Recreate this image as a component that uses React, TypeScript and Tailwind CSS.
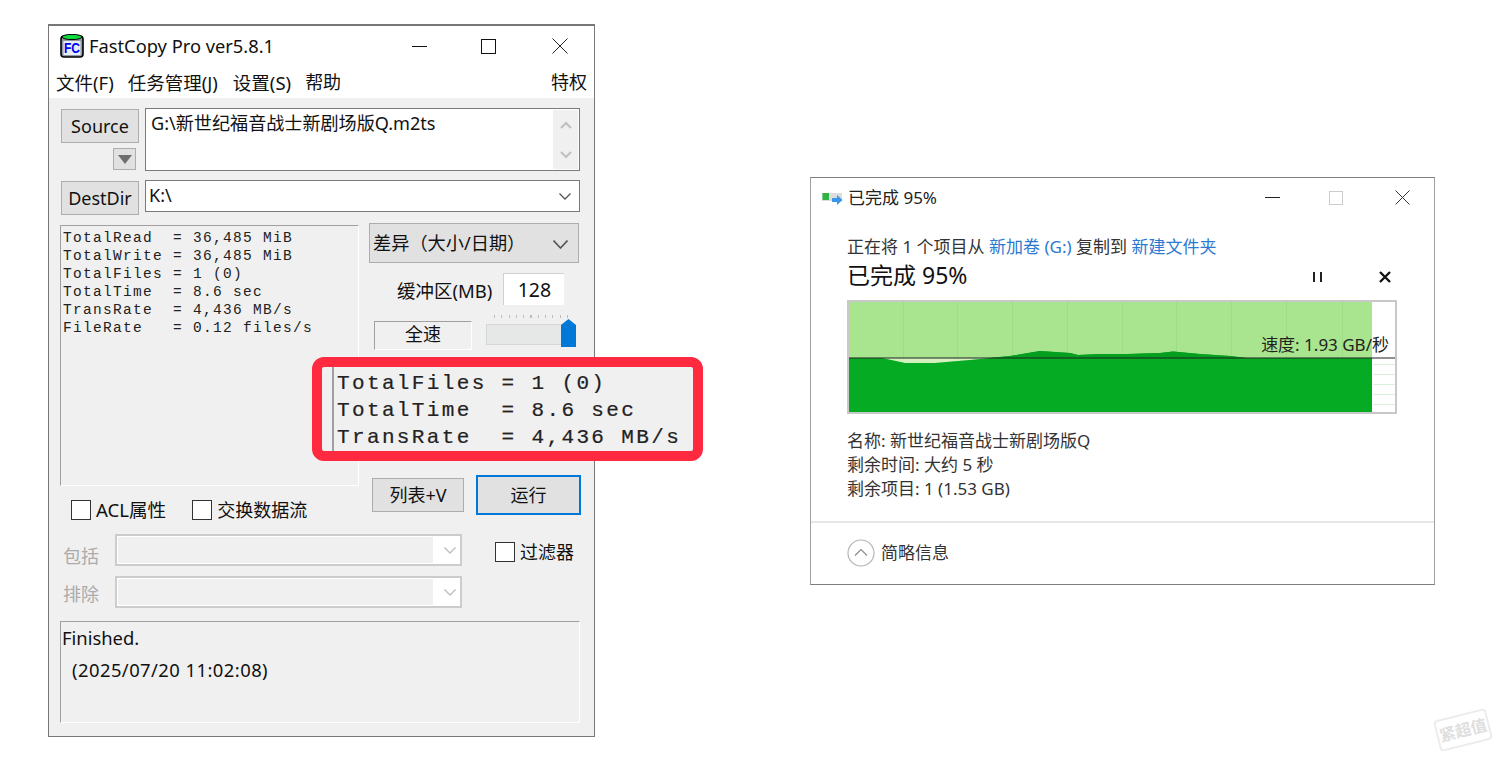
import React from "react";

const Chevron = ({ className = "", color = "#606060", w = 12, h = 7, sw = 1.3 }: { className?: string; color?: string; w?: number; h?: number; sw?: number }) => (
  <svg width={w} height={h} viewBox={`0 0 ${w} ${h}`} className={className} fill="none">
    <path d={`M0.5 0.5 L${w / 2} ${h - 1} L${w - 0.5} 0.5`} stroke={color} strokeWidth={sw} />
  </svg>
);

const Check = ({ label, className = "", textClass = "text-[18px]" }: { label: string; className?: string; textClass?: string }) => (
  <div className={`flex items-center gap-[5px] ${className}`}>
    <div className="w-[20px] h-[20px] bg-white border border-[#333333] shrink-0" />
    <span className={`${textClass} leading-[24px] text-[#111] whitespace-nowrap`}>{label}</span>
  </div>
);

const Btn = ({ label, className = "" }: { label: string; className?: string }) => (
  <div className={`flex items-center justify-center bg-[#e1e1e1] text-[18px] text-[#111] whitespace-nowrap ${className}`}>{label}</div>
);

const Disabled = ({ label, labelClass }: { label: string; labelClass: string }) => (
  <div className="flex items-start h-[32px]">
    <span className={`w-[52px] text-[18px] leading-[24px] text-[#ababab] ${labelClass}`}>{label}</span>
    <div className="w-[347px] h-[32px] bg-white border-2 border-[#cccccc] flex items-center">
      <div className="w-[315px] h-[26px] ml-px bg-[#f0f0f0]" />
      <Chevron className="ml-[11px]" color="#bdbdbd" w={12} h={7} />
    </div>
  </div>
);

const stats = [
  "TotalRead  = 36,485 MiB",
  "TotalWrite = 36,485 MiB",
  "TotalFiles = 1 (0)",
  "TotalTime  = 8.6 sec",
  "TransRate  = 4,436 MB/s",
  "FileRate   = 0.12 files/s",
];

const gridXs = [54, 108, 163, 218, 273, 327, 382, 437, 493];
const fasterLines = [62, 72, 82, 92, 102];

const FastCopy = () => (
  <div className="relative w-[547px] h-[713px] shrink-0 border border-[#777777] border-t-2 bg-white flex flex-col">
    {/* title bar */}
    <div className="h-[43px] flex items-center shrink-0 pb-[3px]">
      <svg width="24" height="24" viewBox="0 0 24 24" className="ml-[11px]">
        <rect x="1" y="2" width="22" height="21" rx="3" fill="#8f98a3" stroke="#000" strokeWidth="1.6" />
        <ellipse cx="12" cy="3" rx="10" ry="2.6" fill="#0fdc3c" stroke="#000" strokeWidth="1" />
        <rect x="3.5" y="7" width="17" height="14" fill="#e8ecf4" />
        <text x="12" y="19.4" textAnchor="middle" fontSize="14.5" fontWeight="700" fill="#0000f0" fontFamily="Liberation Sans" textLength="16" lengthAdjust="spacingAndGlyphs">FC</text>
      </svg>
      <span className="ml-[5px] text-[18.3px] text-[#111] whitespace-nowrap">FastCopy Pro ver5.8.1</span>
      <div className="ml-[138px] w-[15px] h-px bg-[#111]" />
      <div className="ml-[54px] w-[15px] h-[15px] border border-[#111]" />
      <svg width="16" height="16" viewBox="0 0 16 16" className="ml-[56px]">
        <path d="M0.5 0.5 L15.5 15.5 M15.5 0.5 L0.5 15.5" stroke="#222" strokeWidth="1" />
      </svg>
    </div>
    {/* menu */}
    <div className="h-[29px] flex items-center pl-[7px] pr-[7px] pb-[2px] text-[18.5px] text-[#111] shrink-0">
      <span>文件(F)</span>
      <span className="ml-[14px]">任务管理(J)</span>
      <span className="ml-[15px]">设置(S)</span>
      <span className="ml-[14px] text-[18px]">帮助</span>
      <span className="ml-auto text-[18px]">特权</span>
    </div>
    {/* client */}
    <div className="flex-1 bg-[#f0f0f0] pl-[11px] pt-[10px] flex flex-col min-h-0">
      {/* source */}
      <div className="flex">
        <div className="w-[85px] shrink-0 flex flex-col pl-px pt-px">
          <Btn label="Source" className="w-[78px] h-[34px] border border-[#adadad]" />
          <div className="self-end mr-[9px] mt-[5px] w-[23px] h-[22px] bg-[#e1e1e1] border border-[#adadad] flex items-center justify-center">
            <svg width="14" height="9" viewBox="0 0 14 9"><path d="M0 0 H14 L7 9 Z" fill="#6e6e6e" /></svg>
          </div>
        </div>
        <div className="w-[435px] h-[63px] bg-white border border-[#7a7a7a] relative pl-[5px] text-[18.1px] leading-[28px] text-[#111] whitespace-nowrap">
          G:\新世纪福音战士新剧场版Q.m2ts
          <div className="absolute right-px top-px bottom-px w-[25px] bg-[#f0f0f0] flex flex-col items-center justify-center gap-[22px]">
            <svg width="12" height="8" viewBox="0 0 12 8" fill="none"><path d="M1 7 L6 2 L11 7" stroke="#c0c0c0" strokeWidth="2.2" /></svg>
            <svg width="12" height="8" viewBox="0 0 12 8" fill="none"><path d="M1 1 L6 6 L11 1" stroke="#c0c0c0" strokeWidth="2.2" /></svg>
          </div>
        </div>
      </div>
      {/* dest */}
      <div className="flex mt-[9px]">
        <div className="w-[85px] shrink-0 pl-px pt-px">
          <Btn label="DestDir" className="w-[78px] h-[34px] border border-[#adadad]" />
        </div>
        <div className="w-[435px] h-[32px] bg-white border border-[#7a7a7a] flex items-center pl-[3px] pr-[8px] text-[18px] text-[#111]">
          <span className="-mt-[2px]">K:\</span>
          <Chevron className="ml-auto" color="#555555" />
        </div>
      </div>
      {/* middle */}
      <div className="flex mt-[8px]">
        <div className="w-[309px] shrink-0 pt-[2px]">
          <div className="w-[299px] h-[261px] border border-[#a0a0a0] border-r-white border-b-white pl-[2px] pt-[3px] font-['Liberation_Mono',monospace] text-[14.5px] leading-[18px] tracking-[1.3px] text-[#222] whitespace-pre">
            {stats.map((s) => (<div key={s}>{s}</div>))}
          </div>
          <div className="flex mt-[12px] ml-[11px]">
            <Check label="ACL属性" textClass="text-[18.6px]" />
            <Check label="交换数据流" className="ml-[26px]" />
          </div>
        </div>
        <div className="w-[212px] flex flex-col">
          <div className="w-[210px] h-[40px] bg-[#e1e1e1] border border-[#adadad] flex items-center pl-[3px] pr-[10px] pt-[2px] text-[18.2px] text-[#111] whitespace-nowrap">
            差异（大小/日期）
            <Chevron className="ml-auto" color="#555555" w={15} h={9} sw={1.6} />
          </div>
          <div className="flex items-center mt-[10px] pl-[28px]">
            <span className="text-[18.5px] text-[#111] whitespace-nowrap pt-[4px]">缓冲区(MB)</span>
            <div className="ml-[11px] w-[61px] h-[32px] bg-white border-l border-t border-[#d0d0d0] flex items-center justify-center text-[19.5px] text-[#111]">128</div>
          </div>
          <div className="flex mt-[16px] pl-[5px]">
            <div className="w-[98px] h-[29px] border border-[#a0a0a0] border-r-white border-b-white flex items-center justify-center pb-[2px] text-[18px] text-[#111]">全速</div>
            <div className="relative ml-[14px] w-[90px] h-[29px]">
              <div className="absolute left-0 top-[3px] w-[80px] h-[21px] bg-[#e6e8e8] border border-[#d6d6d6]" />
              <div className="absolute left-[8px] -top-[6px] w-[74px] h-[3px] bg-[repeating-linear-gradient(90deg,#bdbdbd_0,#bdbdbd_1px,transparent_1px,transparent_7.3px)]" />
              <svg width="15" height="28" viewBox="0 0 15 28" className="absolute left-[75px] -top-[2px]"><path d="M7.5 0 L15 6 V28 H0 V6 Z" fill="#0078d7" /></svg>
            </div>
          </div>
          <div className="flex items-center mt-[125px] pl-[3px]">
            <Btn label="列表+V" className="w-[92px] h-[34px] border border-[#adadad]" />
            <Btn label="运行" className="ml-[12px] w-[105px] h-[40px] border-2 border-[#0078d7]" />
          </div>
        </div>
      </div>
      {/* filters */}
      <div className="flex mt-[12px]">
        <div className="w-[435px] shrink-0 pl-[3px] flex flex-col gap-[10px]">
          <Disabled label="包括" labelClass="pt-[10px]" />
          <Disabled label="排除" labelClass="pt-[6px]" />
        </div>
        <Check label="过滤器" className="h-[20px] mt-[8px]" />
      </div>
      {/* status */}
      <div className="w-[520px] h-[102px] mt-[13px] border border-[#a0a0a0] border-r-white border-b-white pl-px text-[18.4px] text-[#111] flex flex-col whitespace-nowrap">
        <span className="leading-[24px] mt-[4px]">Finished.</span>
        <span className="leading-[24px] mt-[8px] pl-[10px] tracking-[0.45px]">(2025/07/20 11:02:08)</span>
      </div>
    </div>
    {/* enlarged overlay */}
    <div className="absolute left-[263px] top-[331px] w-[391px] h-[104px] rounded-[12px] border-[10px] border-[#ff2a40] bg-[#f0f0f0] pl-[15px] font-['Liberation_Mono',monospace] text-[21px] leading-[27px] tracking-[2.36px] text-[#222] [-webkit-text-stroke:0.2px_#222] whitespace-pre">
      <div className="absolute left-[10px] top-0 bottom-0 w-[2px] bg-[#a0a0a0]" />
      <div className="pt-[3px]">TotalFiles = 1 (0)</div>
      <div>TotalTime  = 8.6 sec</div>
      <div>TransRate  = 4,436 MB/s</div>
    </div>
  </div>
);

const Explorer = () => (
  <div className="w-[625px] h-[408px] ml-[215px] mt-[153px] shrink-0 bg-white border border-[#a0a0a0] border-t-[#7e7e7e] border-b-[#7e7e7e] flex flex-col">
    <div className="h-[39px] flex items-center shrink-0">
      <svg width="21" height="14" viewBox="0 0 21 14" className="ml-[11px] mt-[2px]">
        <rect x="0" y="1" width="20" height="8" fill="#dddddd" />
        <rect x="0.5" y="1" width="6.5" height="7" fill="#2fb344" />
        <path d="M10 6 H15 V3 L20.5 8 L15 13 V10 H10 Z" fill="#3a96e6" />
      </svg>
      <span className="ml-[5px] text-[17px] text-[#222] whitespace-nowrap">已完成 95%</span>
      <div className="ml-[328px] w-[15px] h-px bg-[#222]" />
      <div className="ml-[49px] w-[14px] h-[14px] border border-[#cccccc]" />
      <svg width="15" height="15" viewBox="0 0 15 15" className="ml-[52px]">
        <path d="M0.5 0.5 L14.5 14.5 M14.5 0.5 L0.5 14.5" stroke="#333" strokeWidth="1" />
      </svg>
    </div>
    <div className="pl-[36px] flex flex-col">
      <div className="mt-[18px] text-[17px] leading-[24px] text-[#333] whitespace-nowrap">
        正在将 1 个项目从 <span className="text-[#2b79d0]">新加卷 (G:)</span> 复制到 <span className="text-[#2b79d0]">新建文件夹</span>
      </div>
      <div className="flex items-center h-[32px]">
        <span className="text-[23px] leading-[32px] text-[#111] whitespace-nowrap">已完成 95%</span>
        <svg width="12" height="12" viewBox="0 0 12 12" className="ml-[345px] mt-[4px]"><path d="M2 1 V11 M9 1 V11" stroke="#222" strokeWidth="2" /></svg>
        <svg width="12" height="12" viewBox="0 0 12 12" className="ml-[55px] mt-[4px]"><path d="M1 1 L11 11 M11 1 L1 11" stroke="#111" strokeWidth="2.4" /></svg>
      </div>
      <div className="relative mt-[9px] w-[550px] h-[114px] border-2 border-[#c8c8c8] bg-white">
        <svg width="546" height="110" viewBox="0 0 546 110" className="block">
          <rect x="0" y="0" width="523" height="110" fill="#a9e58f" />
          {gridXs.map((x) => (<rect key={x} x={x} y="0" width="1" height="56" fill="#9bdf82" />))}
          <path d="M33 56 L56 61 L86 61 L121 58 L141 56 Z" fill="#d3f1bf" />
          <path d="M0 56 H33 L56 61 L86 61 L121 58 L141 56 L161 54 L191 49 L221 51 L229 53 L251 52 L278 52 L311 51 L324 49.5 L351 52 L381 54 L398 56 L436 56 L523 56 V110 H0 Z" fill="#05ab23" />
          <path d="M140 56 L161 54 L191 49 L221 51 L229 53 L251 52 L278 52 L311 51 L324 49.5 L351 52 L381 54 L398 56 Z" fill="#059f20" />
          {fasterLines.map((y) => (<rect key={y} x="524" y={y} width="22" height="1" fill="#d9f2d9" />))}
          <rect x="0" y="55.5" width="546" height="1" fill="#222222" />
        </svg>
        <span className="absolute right-[6px] top-[31px] text-[17px] leading-[24px] text-[#222] whitespace-nowrap">速度: 1.93 GB/秒</span>
      </div>
      <div className="mt-[15px] text-[17px] leading-[24px] text-[#333] whitespace-nowrap">
        <div>名称: 新世纪福音战士新剧场版Q</div>
        <div>剩余时间: 大约 5 秒</div>
        <div>剩余项目: 1 (1.53 GB)</div>
      </div>
    </div>
    <div className="mt-[20px] h-[2px] bg-[#e6e6e6]" />
    <div className="pl-[36px] flex items-center h-[60px]">
      <svg width="28" height="28" viewBox="0 0 28 28" fill="none">
        <circle cx="14" cy="14" r="13" stroke="#b5b5b5" strokeWidth="1.2" />
        <path d="M8 16.5 L14 10.5 L20 16.5" stroke="#8a8a8a" strokeWidth="1.2" />
      </svg>
      <span className="ml-[6px] text-[17px] text-[#333]">简略信息</span>
    </div>
  </div>
);

export default function App() {
  return (
    <div className="relative w-[1500px] h-[760px] bg-white overflow-hidden font-['Noto_Sans','Noto_Sans_CJK_SC',sans-serif]">
      <div className="flex items-start pl-[48px] pt-[24px]">
        <FastCopy />
        <Explorer />
      </div>
      {/* watermark */}
      <div className="absolute left-[1436px] top-[714px] w-[54px] h-[32px] -rotate-[14deg] rounded-[4px] border-2 border-[#ececec] flex items-center justify-center">
        <span className="text-[16px] leading-[16px] font-bold text-[#dedede] whitespace-nowrap">紧超值</span>
      </div>
    </div>
  );
}
